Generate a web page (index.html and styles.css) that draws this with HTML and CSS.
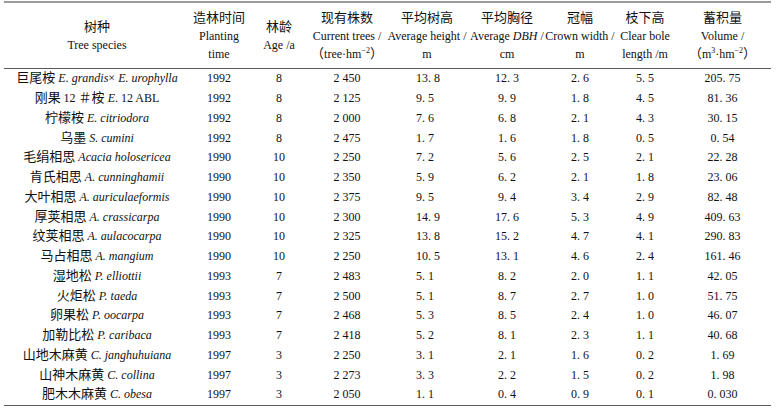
FILE: index.html
```html
<!DOCTYPE html>
<html lang="zh">
<head>
<meta charset="utf-8">
<title>Table</title>
<link rel="stylesheet" href="styles.css">
</head>
<body>
<table class="data">
  <colgroup>
    <col class="w1"><col class="w2"><col class="w3"><col class="w4"><col class="w5"><col class="w6"><col class="w7"><col class="w8"><col class="w9">
  </colgroup>
  <thead>
    <tr>
      <th><span class="zh">树种</span><br>Tree species</th>
      <th><span class="zh">造林时间</span><br>Planting<br>time</th>
      <th><span class="zh">林龄</span><br>Age /a</th>
      <th><span class="zh">现有株数</span><br>Current trees /<br><span class="zh">（</span>tree·hm<sup>−2</sup><span class="zh">）</span></th>
      <th><span class="zh">平均树高</span><br>Average height /<br>m</th>
      <th><span class="zh">平均胸径</span><br>Average <i>DBH</i> /<br>cm</th>
      <th><span class="zh">冠幅</span><br>Crown width /<br>m</th>
      <th><span class="zh">枝下高</span><br>Clear bole<br>length /m</th>
      <th><span class="zh">蓄积量</span><br>Volume /<br><span class="zh">（</span>m<sup>3</sup>·hm<sup>−2</sup><span class="zh">）</span></th>
    </tr>
  </thead>
  <tbody>
    <tr><td><span class="zh">巨尾桉</span> <i>E. grandis</i>× <i>E. urophylla</i></td><td>1992</td><td>8</td><td>2 450</td><td class="left">13. 8</td><td>12. 3</td><td>2. 6</td><td>5. 5</td><td>205. 75</td></tr>
    <tr><td><span class="zh">刚果 </span>12 <span class="zh">＃桉</span> <i>E</i>. 12 ABL</td><td>1992</td><td>8</td><td>2 125</td><td class="left">9. 5</td><td>9. 9</td><td>1. 8</td><td>4. 5</td><td>81. 36</td></tr>
    <tr><td><span class="zh">柠檬桉</span> <i>E. citriodora</i></td><td>1992</td><td>8</td><td>2 000</td><td class="left">7. 6</td><td>6. 8</td><td>2. 1</td><td>4. 3</td><td>30. 15</td></tr>
    <tr><td><span class="zh">乌墨</span> <i>S. cumini</i></td><td>1992</td><td>8</td><td>2 475</td><td class="left">1. 7</td><td>1. 6</td><td>1. 8</td><td>0. 5</td><td>0. 54</td></tr>
    <tr><td><span class="zh">毛绢相思</span> <i>Acacia holosericea</i></td><td>1990</td><td>10</td><td>2 250</td><td class="left">7. 2</td><td>5. 6</td><td>2. 5</td><td>2. 1</td><td>22. 28</td></tr>
    <tr><td><span class="zh">肯氏相思</span> <i>A. cunninghamii</i></td><td>1990</td><td>10</td><td>2 350</td><td class="left">5. 9</td><td>6. 2</td><td>2. 1</td><td>1. 8</td><td>23. 06</td></tr>
    <tr><td><span class="zh">大叶相思</span> <i>A. auriculaeformis</i></td><td>1990</td><td>10</td><td>2 375</td><td class="left">9. 5</td><td>9. 4</td><td>3. 4</td><td>2. 9</td><td>82. 48</td></tr>
    <tr><td><span class="zh">厚荚相思</span> <i>A. crassicarpa</i></td><td>1990</td><td>10</td><td>2 300</td><td class="left">14. 9</td><td>17. 6</td><td>5. 3</td><td>4. 9</td><td>409. 63</td></tr>
    <tr><td><span class="zh">纹荚相思</span> <i>A. aulacocarpa</i></td><td>1990</td><td>10</td><td>2 325</td><td class="left">13. 8</td><td>15. 2</td><td>4. 7</td><td>4. 1</td><td>290. 83</td></tr>
    <tr><td><span class="zh">马占相思</span> <i>A. mangium</i></td><td>1990</td><td>10</td><td>2 250</td><td class="left">10. 5</td><td>13. 1</td><td>4. 6</td><td>2. 4</td><td>161. 46</td></tr>
    <tr><td><span class="zh">湿地松</span> <i>P. elliottii</i></td><td>1993</td><td>7</td><td>2 483</td><td class="left">5. 1</td><td>8. 2</td><td>2. 0</td><td>1. 1</td><td>42. 05</td></tr>
    <tr><td><span class="zh">火炬松</span> <i>P. taeda</i></td><td>1993</td><td>7</td><td>2 500</td><td class="left">5. 1</td><td>8. 7</td><td>2. 7</td><td>1. 0</td><td>51. 75</td></tr>
    <tr><td><span class="zh">卵果松</span> <i>P. oocarpa</i></td><td>1993</td><td>7</td><td>2 468</td><td class="left">5. 3</td><td>8. 5</td><td>2. 4</td><td>1. 0</td><td>46. 07</td></tr>
    <tr><td><span class="zh">加勒比松</span> <i>P. caribaca</i></td><td>1993</td><td>7</td><td>2 418</td><td class="left">5. 2</td><td>8. 1</td><td>2. 3</td><td>1. 1</td><td>40. 68</td></tr>
    <tr><td><span class="zh">山地木麻黄</span> <i>C. janghuhuiana</i></td><td>1997</td><td>3</td><td>2 250</td><td class="left">3. 1</td><td>2. 1</td><td>1. 6</td><td>0. 2</td><td>1. 69</td></tr>
    <tr><td><span class="zh">山神木麻黄</span> <i>C. collina</i></td><td>1997</td><td>3</td><td>2 273</td><td class="left">3. 3</td><td>2. 2</td><td>1. 5</td><td>0. 2</td><td>1. 98</td></tr>
    <tr class="last"><td><span class="zh">肥木木麻黄</span> <i>C. obesa</i></td><td>1997</td><td>3</td><td>2 050</td><td class="left">1. 1</td><td>0. 4</td><td>0. 9</td><td>0. 1</td><td>0. 030</td></tr>
  </tbody>
</table>
</body>
</html>
```

FILE: styles.css
```css
html, body {
  margin: 0;
  padding: 0;
  background: #ffffff;
}

body {
  font-family: "Liberation Serif", "Noto Sans CJK SC", serif;
  font-size: 12px;
  color: #111111;
}

.data {
  margin: 1px 0 0 4px;
  width: 767px;
  table-layout: fixed;
  border-collapse: separate;
  border-spacing: 0;
}

.w1 { width: 186px; }
.w2 { width: 58px; }
.w3 { width: 62px; }
.w4 { width: 74px; }
.w5 { width: 86px; }
.w6 { width: 74px; }
.w7 { width: 72px; }
.w8 { width: 58px; }
.w9 { width: 97px; }

.data th {
  padding: 0;
  height: 65px;
  line-height: 18px;
  font-weight: normal;
  text-align: center;
  vertical-align: middle;
  white-space: nowrap;
  border-top: 2px solid #9a9a9a;
  border-bottom: 1px solid #5a5a5a;
}

.data td {
  padding: 0;
  height: 19.75px;
  line-height: 19px;
  text-align: center;
  vertical-align: middle;
  white-space: nowrap;
}

.data td.left {
  text-align: left;
  padding-left: 32px;
}

.data tr.last td {
  border-bottom: 1px solid #5a5a5a;
}

.zh {
  font-family: "Noto Sans CJK SC", sans-serif;
  font-size: 13px;
  line-height: 1;
}

sup {
  font-size: 8px;
  line-height: 0;
  vertical-align: 5px;
}

i {
  font-style: italic;
}
```
